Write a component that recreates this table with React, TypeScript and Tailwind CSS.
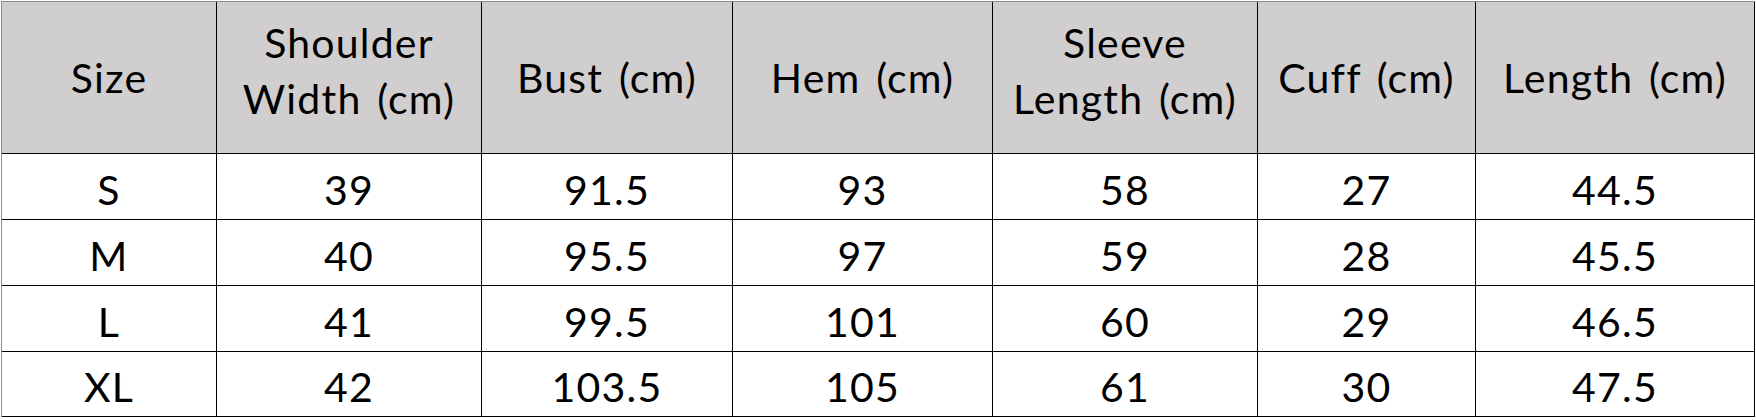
const headers: { label: string[] }[] = [
  { label: ['Size'] },
  { label: ['Shoulder', 'Width (cm)'] },
  { label: ['Bust (cm)'] },
  { label: ['Hem (cm)'] },
  { label: ['Sleeve', 'Length (cm)'] },
  { label: ['Cuff (cm)'] },
  { label: ['Length (cm)'] },
];

const rows: string[][] = [
  ['S', '39', '91.5', '93', '58', '27', '44.5'],
  ['M', '40', '95.5', '97', '59', '28', '45.5'],
  ['L', '41', '99.5', '101', '60', '29', '46.5'],
  ['XL', '42', '103.5', '105', '61', '30', '47.5'],
];

export default function App() {
  return (
    <div className="w-[1756px] h-[420px] bg-white pt-px pl-px text-black font-['Lato','Liberation_Sans',sans-serif] text-[41px] tracking-[1.2px] [word-spacing:4px]">
      <div className="w-fit border-t border-l border-[#8c8c8c]">
        <div className="grid grid-cols-[214px_264px_250px_259px_264px_217px_278px] grid-rows-[151px_65px_65px_65px_64px] gap-px bg-black border-r border-b border-black">
          {headers.map((h) => (
            <div
              key={h.label.join(' ')}
              className={`bg-[#d0cece] flex flex-col items-center justify-center leading-[56px] ${
                h.label.length > 1 ? 'pb-[14px]' : ''
              }`}
            >
              {h.label.map((line) => (
                <span key={line} className="whitespace-nowrap">
                  {line}
                </span>
              ))}
            </div>
          ))}
          {rows.map((row) =>
            row.map((cell, i) => (
              <div key={row[0] + i} className="bg-white flex items-center justify-center pt-[5px] leading-none">
                {cell}
              </div>
            ))
          )}
        </div>
      </div>
    </div>
  );
}
